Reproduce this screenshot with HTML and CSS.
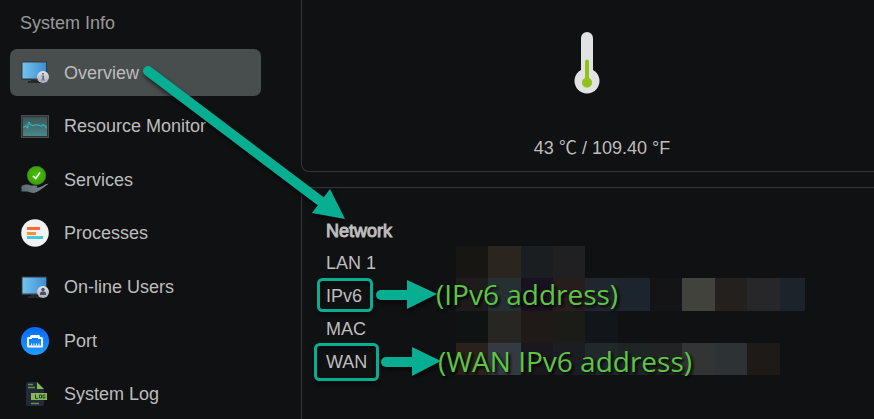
FILE: index.html
```html
<!DOCTYPE html>
<html lang="en">
<head>
<meta charset="utf-8">
<title>System Info</title>
<link rel="stylesheet" href="styles.css">
</head>
<body>
<svg class="defs" width="0" height="0" aria-hidden="true">
  <defs>
    <linearGradient id="screen" x1="0" x2="1"><stop offset="0" stop-color="#73c5ee"/><stop offset="1" stop-color="#3f8dd3"/></linearGradient>
    <linearGradient id="graph" x1="0" x2="0" y1="0" y2="1"><stop offset="0" stop-color="#3c5556"/><stop offset="1" stop-color="#47898a"/></linearGradient>
    <linearGradient id="badge" x1="0" x2="0" y1="0" y2="1"><stop offset="0" stop-color="#e4e5ea"/><stop offset="1" stop-color="#a9acb5"/></linearGradient>
    <linearGradient id="port" x1="0" x2="0" y1="0" y2="1"><stop offset="0" stop-color="#0668fb"/><stop offset="1" stop-color="#229dff"/></linearGradient>
    <linearGradient id="hand" x1="0" x2="1"><stop offset="0" stop-color="#5f6b74"/><stop offset="1" stop-color="#7b868e"/></linearGradient>
    <radialGradient id="ok"><stop offset="0" stop-color="#49bf05"/><stop offset="1" stop-color="#38a305"/></radialGradient>
  </defs>
</svg>
<div class="app">
  <aside class="sidebar">
    <h2 class="sidebar-title">System Info</h2>
    <nav class="menu" aria-label="System Info">
      <a class="item active" href="#overview" aria-current="page">
        <svg class="icon" viewBox="0 0 28 28" aria-hidden="true">
          <path d="M10 20h6v2h4v2H7v-2h3z" fill="#252729"/>
          <rect x=".5" y="2.500" width="25.500" height="18.500" rx="1" fill="#35383b"/>
          <rect x="1.500" y="3.500" width="23.500" height="16" fill="url(#screen)"/>
          <circle cx="22" cy="18" r="6" fill="url(#badge)"/>
          <path d="M21 14h2v1.600h-2zM20.500 16.500H23v4h.8v1h-3.300v-1h.8v-3h-.8z" fill="#6b6e79"/>
        </svg>
        Overview
      </a>
      <a class="item" href="#resource">
        <svg class="icon" viewBox="0 0 28 28" aria-hidden="true">
          <rect x=".5" y="3.500" width="27" height="22" fill="#303335" stroke="#4a4c4e"/>
          <rect x="2" y="5" width="24" height="19" fill="url(#graph)"/>
          <path d="M2 15h2v-1h2v2h1v-4l1-2 1 1v2h2l1 1 1-1h5l1 1h2v-1h2v1h2v2h1" fill="none" stroke="#35bcc1" stroke-width="1"/>
        </svg>
        Resource Monitor
      </a>
      <a class="item" href="#services">
        <svg class="icon" viewBox="0 0 28 28" aria-hidden="true">
          <path d="M.5 20C4 18 7 18 10 19.500h5q2 .6.500 2.300 6-1 8-3 2.500-1.300 4-1-4 3.300-8 6-4 3-7 3.200-3-.5-6-1.500H.5z" fill="url(#hand)"/>
          <circle cx="15.500" cy="9.500" r="9.300" fill="url(#ok)" stroke="#5b8050" stroke-width=".5"/>
          <path d="M12 10l2.700 2.500L19 6.500" fill="none" stroke="#fff" stroke-width="1.700"/>
        </svg>
        Services
      </a>
      <a class="item" href="#processes">
        <svg class="icon" viewBox="0 0 28 28" aria-hidden="true">
          <circle cx="14" cy="14" r="13.800" fill="#f2f2f2"/>
          <path d="M6 8h13v3H6z" fill="#ff6839"/><path d="M6 13h9v3H6z" fill="#ff9036"/><path d="M6 17h16v3H6z" fill="#4cc7d5"/>
        </svg>
        Processes
      </a>
      <a class="item" href="#users">
        <svg class="icon" viewBox="0 0 28 28" aria-hidden="true">
          <path d="M10 21h6v2h4v2H7v-2h3z" fill="#252729"/>
          <rect x=".5" y="3.500" width="25.500" height="18.500" rx="1" fill="#35383b"/>
          <rect x="1.500" y="4.500" width="23.500" height="16" fill="url(#screen)"/>
          <circle cx="22" cy="19" r="6" fill="url(#badge)"/>
          <circle cx="22" cy="16.500" r="1.700" fill="#4a4e61"/><path d="M19 22v-1.500q0-2 2-2h2q2 0 2 2V22z" fill="#4a4e61"/>
        </svg>
        On-line Users
      </a>
      <a class="item" href="#port">
        <svg class="icon" viewBox="0 0 28 28" aria-hidden="true">
          <circle cx="14" cy="14" r="14" fill="url(#port)"/>
          <path d="M7.500 19.500q-.5 0-.5-.5v-7.500q0-.5.500-.5H10V9.500h8V11h2.500q.5 0 .5.500V19q0 .5-.5.500z" fill="none" stroke="#fff" stroke-width="2"/>
          <path d="M10 8h8v3h-8zM10 16.500h1v2h-1zM12.500 16.500h1v2h-1zM15 16.500h1v2h-1zM17.500 16.500h1v2h-1z" fill="#fff"/>
        </svg>
        Port
      </a>
      <a class="item" href="#log">
        <svg class="icon" viewBox="0 0 28 28" aria-hidden="true">
          <path d="M7 2h9l7 7v15q0 2-2 2H7q-2 0-2-2V4q0-2 2-2z" fill="#24283a"/>
          <path d="M16 2l7 7h-7zM10 13h16v7H10z" fill="#82bb55"/>
          <path d="M7 4.500h5M7 7.500h7M10 23.500h8" stroke="#5d9146" stroke-width="1.400"/>
          <path d="M14.500 14.500v3.800H17M18.500 15h2v3h-2zM24.500 15H22v3h2v-1.500" fill="none" stroke="#29402f" stroke-width="1"/>
        </svg>
        System Log
      </a>
    </nav>
  </aside>
  <main class="content">
    <section class="card temperature" aria-label="Temperature">
      <svg class="thermometer" viewBox="0 0 26 62" aria-hidden="true">
        <path d="M7 6a6 6 0 0 1 12 0v32a12.500 12.500 0 1 1-12 0z" fill="#e2e2e2"/>
        <path d="M11 29.500a2 2 0 0 1 4 0v16.500a5 5 0 1 1-4 0z" fill="#8fc31a"/>
      </svg>
      <p class="reading">43 <span class="unit">℃</span> / 109.40 °F</p>
    </section>
    <section class="card network">
      <h3 class="network-title">Network</h3>
      <ul class="fields">
        <li>LAN 1</li>
        <li>IPv6</li>
        <li>MAC</li>
        <li>WAN</li>
      </ul>
    </section>
  </main>
  <svg class="overlay" width="874" height="419" aria-hidden="true">
    <g shape-rendering="crispEdges">
      <path fill="#181612" d="M456 246h32v32h-32z"/><path fill="#2b2520" d="M488 246h33v32h-33z"/><path fill="#1a1e21" d="M521 246h32v32h-32z"/><path fill="#202022" d="M553 246h32v32h-32z"/>
      <path fill="#1e1b1d" d="M456 278h32v33h-32z"/><path fill="#263032" d="M488 278h33v33h-33z"/><path fill="#18111f" d="M521 278h32v33h-32z"/><path fill="#261d1c" d="M553 278h32v33h-32z"/><path fill="#20262e" d="M585 278h33v33h-33z"/><path fill="#1c242d" d="M618 278h32v33h-32z"/><path fill="#141315" d="M650 278h32v33h-32z"/><path fill="#41423c" d="M682 278h33v33h-33z"/><path fill="#24201e" d="M715 278h32v33h-32z"/><path fill="#27272a" d="M747 278h33v33h-33z"/><path fill="#1b232b" d="M780 278h25v33h-25z"/>
      <path fill="#0f1313" d="M456 311h32v32h-32z"/><path fill="#272622" d="M488 311h33v32h-33z"/><path fill="#1f1a18" d="M521 311h32v32h-32z"/><path fill="#1b1c18" d="M553 311h32v32h-32z"/><path fill="#12161b" d="M585 311h33v32h-33z"/>
      <path fill="#2a211b" d="M456 343h32v32h-32z"/><path fill="#343a41" d="M488 343h33v32h-33z"/><path fill="#1a181e" d="M521 343h32v32h-32z"/><path fill="#1c1d22" d="M553 343h32v32h-32z"/><path fill="#20282b" d="M585 343h33v32h-33z"/><path fill="#1f2525" d="M618 343h32v32h-32z"/><path fill="#222424" d="M650 343h32v32h-32z"/><path fill="#333535" d="M682 343h33v32h-33z"/><path fill="#2d3235" d="M715 343h32v32h-32z"/><path fill="#1e1a17" d="M747 343h33v32h-33z"/>
    </g>
    <g class="marks">
      <path class="shaft" d="M148 71L323 203"/><path class="head" d="M345 219L330 189L312 213z"/>
      <path class="shaft" d="M381 295H408"/><path class="head" d="M437 294L407 280V309z"/>
      <path class="shaft" d="M386 362H413"/><path class="head" d="M441 361L412 347V376z"/>
      <rect class="frame" x="318.500" y="279.500" width="53" height="31" rx="4"/>
      <rect class="frame" x="315.500" y="344.500" width="62" height="35" rx="4"/>
    </g>
  </svg>
  <span class="note note-ipv6">(IPv6 address)</span>
  <span class="note note-wan">(WAN IPv6 address)</span>
</div>
</body>
</html>
```
FILE: styles.css
```css
* { box-sizing: border-box; }

body {
  margin: 0;
  background: #101113;
  color: #bdbdbd;
  font-family: "Liberation Sans", Arial, sans-serif;
  font-size: 18px;
  line-height: 24px;
}

h2, h3, p, ul { margin: 0; padding: 0; }

.defs { position: absolute; }

.app {
  position: relative;
  display: grid;
  grid-template-columns: 301px 1fr;
  height: 100vh;
  overflow: hidden;
}

.sidebar {
  display: flex;
  flex-direction: column;
  padding: 11px 40px 1px 10px;
}

.sidebar-title {
  margin-bottom: 14px;
  padding-left: 10px;
  color: #999;
  font-size: 18px;
  font-weight: 400;
}

.menu {
  display: flex;
  flex: 1;
  flex-direction: column;
  justify-content: space-between;
}

.item {
  display: flex;
  align-items: center;
  gap: 15px;
  height: 47px;
  padding: 0 11px;
  border-radius: 7px;
  color: inherit;
  text-decoration: none;
}

.item.active { background: #484d4d; }

.icon { width: 28px; height: 28px; }

.content {
  display: grid;
  grid-template-rows: 172px 1fr;
  gap: 15px;
}

.card {
  border: 0 solid #343536;
  border-left-width: 1px;
}

.temperature {
  display: flex;
  flex-direction: column;
  align-items: center;
  justify-content: space-between;
  padding: 32px 2px 11px 0;
  border-bottom-width: 1px;
  border-bottom-left-radius: 8px;
}

.thermometer { width: 26px; height: 62px; }

.reading { padding-left: 30px; }

.unit { font-family: "Liberation Serif", "Noto Sans CJK SC", serif; }

.network {
  padding: 31px 24px;
  border-top-width: 1px;
}

.network-title {
  margin-bottom: 4px;
  font-size: 18px;
  font-weight: 400;
  -webkit-text-stroke: 1px currentColor;
}

.fields { list-style: none; line-height: 33px; }

.overlay { position: absolute; top: 0; left: 0; }

.marks { filter: drop-shadow(1px 3px 2px rgb(0 0 0 / 60%)); }

.shaft {
  fill: none;
  stroke: #07ae91;
  stroke-width: 10px;
  stroke-linecap: round;
}

.head { fill: #07ae91; }

.frame { fill: none; stroke: #07ae91; stroke-width: 3px; }

.note {
  position: absolute;
  color: #5ec544;
  font-family: "Open Sans", sans-serif;
  font-size: 28px;
  font-weight: 500;
  line-height: 36px;
  text-shadow: 2px 2px 3px #000;
  white-space: nowrap;
}

.note-ipv6 { top: 276px; left: 436px; }

.note-wan { top: 343px; left: 438px; }
```
